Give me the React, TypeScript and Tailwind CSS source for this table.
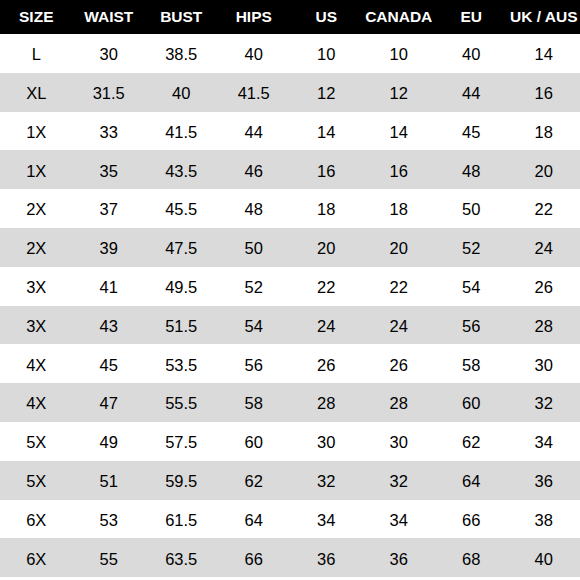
import React from "react";

const headers = ["SIZE", "WAIST", "BUST", "HIPS", "US", "CANADA", "EU", "UK / AUS"];

const rows = [
  ["L", "30", "38.5", "40", "10", "10", "40", "14"],
  ["XL", "31.5", "40", "41.5", "12", "12", "44", "16"],
  ["1X", "33", "41.5", "44", "14", "14", "45", "18"],
  ["1X", "35", "43.5", "46", "16", "16", "48", "20"],
  ["2X", "37", "45.5", "48", "18", "18", "50", "22"],
  ["2X", "39", "47.5", "50", "20", "20", "52", "24"],
  ["3X", "41", "49.5", "52", "22", "22", "54", "26"],
  ["3X", "43", "51.5", "54", "24", "24", "56", "28"],
  ["4X", "45", "53.5", "56", "26", "26", "58", "30"],
  ["4X", "47", "55.5", "58", "28", "28", "60", "32"],
  ["5X", "49", "57.5", "60", "30", "30", "62", "34"],
  ["5X", "51", "59.5", "62", "32", "32", "64", "36"],
  ["6X", "53", "61.5", "64", "34", "34", "66", "38"],
  ["6X", "55", "63.5", "66", "36", "36", "68", "40"],
];

function SizeChart() {
  return (
    <div className="w-[580px] h-[580px] bg-white text-black font-['Liberation_Sans',Arial,sans-serif]">
      <div className="grid grid-cols-8 h-[34px] bg-black text-white font-bold text-[15.5px] items-center">
        {headers.map((h) => (
          <div key={h} className="text-center leading-none">
            {h}
          </div>
        ))}
      </div>
      {rows.map((row, i) => (
        <div
          key={i}
          className={
            i % 2 === 1
              ? "grid grid-cols-8 h-[38.8px] items-center bg-[#dadada] text-[16.5px]"
              : "grid grid-cols-8 h-[38.8px] items-center bg-white text-[16.5px]"
          }
        >
          {row.map((cell, j) => (
            <div key={j} className="text-center leading-none pt-[2px]">
              {cell}
            </div>
          ))}
        </div>
      ))}
    </div>
  );
}

export default function App() {
  return <SizeChart />;
}
